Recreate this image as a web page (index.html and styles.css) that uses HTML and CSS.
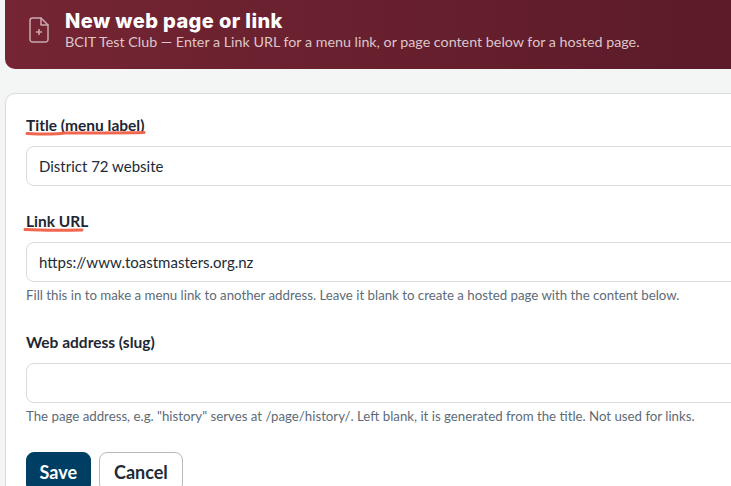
FILE: index.html

```html
<!DOCTYPE html>
<html lang="en">
<head>
  <meta charset="UTF-8">
  <meta name="viewport" content="width=device-width, initial-scale=1.0">
  <title>New web page or link</title>
  <link rel="stylesheet" href="styles.css">
</head>
<body>
  <div class="pagina">
    <header class="banner">
      <svg class="banner-icone" width="22" height="28" viewBox="0 0 22 28" fill="none" stroke="currentColor" stroke-width="1.500" stroke-linecap="round" stroke-linejoin="round">
        <path d="M13 2H4.500A2.500 2.500 0 0 0 2 4.500V23.500A2.500 2.500 0 0 0 4.500 26H17.500A2.500 2.500 0 0 0 20 23.500V9Z"/>
        <path d="M13 2V9H20"/>
        <path d="M11 13.500V18.500M8.500 16H13.500"/>
      </svg>
      <div>
        <h1>New web page or link</h1>
        <p>BCIT Test Club — Enter a Link URL for a menu link, or page content below for a hosted page.</p>
      </div>
    </header>

    <form class="cartao">
      <div class="campo">
        <label class="rotulo marcado">Title (menu label)
          <svg class="risco risco-titulo" width="122" height="6" viewBox="0 0 122 6"><path d="M2 3.500C20 4.500 32 4.200 40 3C60 2.800 95 3.300 119 2.600"/></svg>
        </label>
        <input class="entrada" type="text" value="District 72 website">
      </div>
      <div class="campo">
        <label class="rotulo marcado">Link URL
          <svg class="risco risco-link" width="62" height="6" viewBox="0 0 62 6"><path d="M2 2.500C20 3.500 40 3.400 59 3"/></svg>
        </label>
        <input class="entrada" type="text" value="https://www.toastmasters.org.nz">
        <p class="ajuda">Fill this in to make a menu link to another address. Leave it blank to create a hosted page with the content below.</p>
      </div>
      <div class="campo">
        <label class="rotulo">Web address (slug)</label>
        <input class="entrada" type="text">
        <p class="ajuda">The page address, e.g. "history" serves at /page/history/. Left blank, it is generated from the title. Not used for links.</p>
      </div>
      <div class="acoes">
        <button class="botao botao-salvar" type="button">Save</button>
        <button class="botao botao-cancelar" type="button">Cancel</button>
      </div>
    </form>
  </div>
</body>
</html>
```

FILE: styles.css

```css
html, body {
  margin: 0;
  padding: 0;
  height: 100%;
  overflow: hidden;
  background: #f4f6f6;
  font-family: "Lato", "Open Sans", sans-serif;
  color: #212b36;
}

.pagina {
  width: 900px;
  margin-left: 5px;
}

/* Banner */
.banner {
  display: flex;
  align-items: center;
  gap: 15px;
  height: 69px;
  box-sizing: border-box;
  padding: 0 0 9px 23px;
  border-radius: 0 0 10px 10px;
  background: linear-gradient(90deg, #752534, #5a1a28 85%);
  color: #fff;
}

.banner-icone {
  color: #c9a8b0;
  flex: none;
}

.banner h1 {
  margin: 0;
  font-family: "Inter", sans-serif;
  font-size: 20px;
  font-weight: 800;
  line-height: 24px;
  letter-spacing: 0.400px;
}

.banner p {
  margin: 0;
  font-size: 14.300px;
  line-height: 18px;
  color: #dcc6cb;
}

/* Formulario */
.cartao {
  margin-top: 24px;
  height: 500px;
  padding: 20px 20px 0 20px;
  background: #fff;
  border: 1px solid #d7dcdc;
  border-radius: 10px 0 0 0;
}

.campo {
  margin-bottom: 24px;
}

.rotulo {
  position: relative;
  display: block;
  margin-bottom: 10px;
  font-size: 15.500px;
  font-weight: 700;
  line-height: 22px;
  color: #1d2733;
}

.risco {
  position: absolute;
  left: -1px;
  top: 16px;
  fill: none;
  stroke: #f2664f;
  stroke-width: 3;
  stroke-linecap: round;
}

.risco-link {
  left: -3px;
  top: 17px;
}

.entrada {
  display: block;
  width: 100%;
  height: 40px;
  box-sizing: border-box;
  padding: 0 12px;
  border: 1px solid #d7dcdc;
  border-radius: 8px;
  background: #fff;
  font-family: inherit;
  font-size: 15px;
  color: #212b36;
}

.ajuda {
  margin: 5px 0 0;
  padding-bottom: 4px;
  font-size: 13.250px;
  line-height: 16px;
  color: #5d6b78;
}

.acoes {
  display: flex;
  gap: 8px;
}

.botao {
  height: 40px;
  padding: 0 12.500px;
  border-radius: 8px;
  font-family: inherit;
  font-size: 18px;
  font-weight: 700;
}

.botao-salvar {
  border: 1px solid #003f63;
  background: #003f63;
  color: #fff;
}

.botao-cancelar {
  padding: 0 14.500px;
  border: 1px solid #b5bcbc;
  background: #fff;
  color: #212b36;
}
```
